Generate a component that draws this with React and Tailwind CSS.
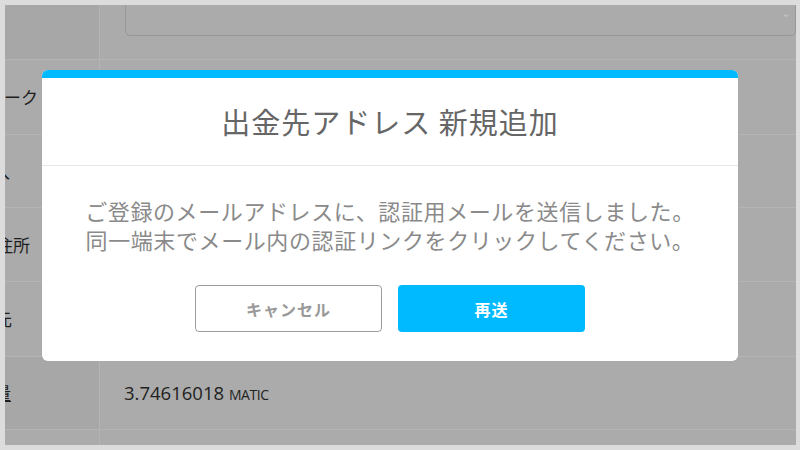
import React from 'react';

const rows = [
  { label: 'ネットワーク', end: 38, h: 'h-[75px]' },
  { label: 'メモ記入', end: 10, h: 'h-[73px]' },
  { label: '出金先住所', end: 30, h: 'h-[74px]' },
  { label: '送金元', end: 12, h: 'h-[75px]' },
  { label: '送金数量', end: 11, h: 'h-[73px]', value: true, dark: true },
];

const jp = { fontFamily: '"Noto Sans CJK JP", "Noto Sans", sans-serif' };

export default function App() {
  return (
    <div className="relative w-[800px] h-[450px] overflow-hidden bg-[#dcdcdc] pt-[5px] pl-[5px] pr-[4px] pb-[5px]" style={jp}>
      <div className="h-full bg-[#ababab] overflow-hidden flex flex-col">
        {/* top row with select box */}
        <div className="flex h-[55px] border-b border-[#b4b4b4] shrink-0">
          <div className="w-[95px] shrink-0 bg-[#a7a7a7] border-r border-[#b4b4b4]" />
          <div className="flex-1 pl-[25px]">
            <div className="relative -mt-[4px] h-[35px] border border-[#979797] rounded-[5px]">
              <span className="absolute right-[4px] top-[4px] text-[12px] leading-none text-[#c4c4c4]">⌄</span>
            </div>
          </div>
        </div>
        {rows.map((r) => (
          <div key={r.label} className={`flex ${r.h} border-b border-[#b4b4b4] shrink-0`}>
            <div className={`w-[95px] shrink-0 border-r border-[#b4b4b4] overflow-hidden flex items-center justify-end ${r.dark ? 'bg-[#a7a7a7]' : ''}`}>
              <span
                className={`whitespace-nowrap text-[17px] text-[#1e1e1e] ${r.value ? 'underline' : ''}`}
                style={{ marginRight: 99 - r.end }}
              >
                {r.label}
              </span>
            </div>
            <div className="flex-1 flex items-center pl-[24px]">
              {r.value && (
                <span className="text-[#222] text-[18.5px]" style={{ fontFamily: '"Open Sans", "Noto Sans", sans-serif' }}>
                  3.74616018 <span className="text-[14px] tracking-[-0.4px]">MATIC</span>
                </span>
              )}
            </div>
          </div>
        ))}
        <div className="flex flex-1">
          <div className="w-[95px] shrink-0 border-r border-[#b4b4b4]" />
        </div>
      </div>

      {/* modal */}
      <div className="absolute left-[42px] top-[70px] w-[696px] bg-white rounded-[6px] overflow-hidden">
        <div className="h-[8px] bg-[#00baff]" />
        <div className="h-[88px] border-b border-[#e6e6e6] flex items-center justify-center">
          <h2 className="text-[29px] text-[#666] tracking-[1px] leading-none">出金先アドレス 新規追加</h2>
        </div>
        <div className="pt-[30px] pb-[29px] flex flex-col items-center">
          <p className="text-[22px] leading-[29px] text-[#8a8a8a] text-center tracking-[0.6px]">
            ご登録のメールアドレスに、認証用メールを送信しました。
            <br />
            同一端末でメール内の認証リンクをクリックしてください。
          </p>
          <div className="flex gap-[16px] mt-[31px]">
            <button className="w-[187px] h-[47px] rounded-[4px] border border-[#9c9c9c] bg-white text-[16px] font-bold text-[#999] tracking-[1px]">
              キャンセル
            </button>
            <button className="w-[187px] h-[47px] rounded-[4px] bg-[#00baff] text-[16px] font-bold text-white tracking-[1px]">
              再送
            </button>
          </div>
        </div>
      </div>
    </div>
  );
}
